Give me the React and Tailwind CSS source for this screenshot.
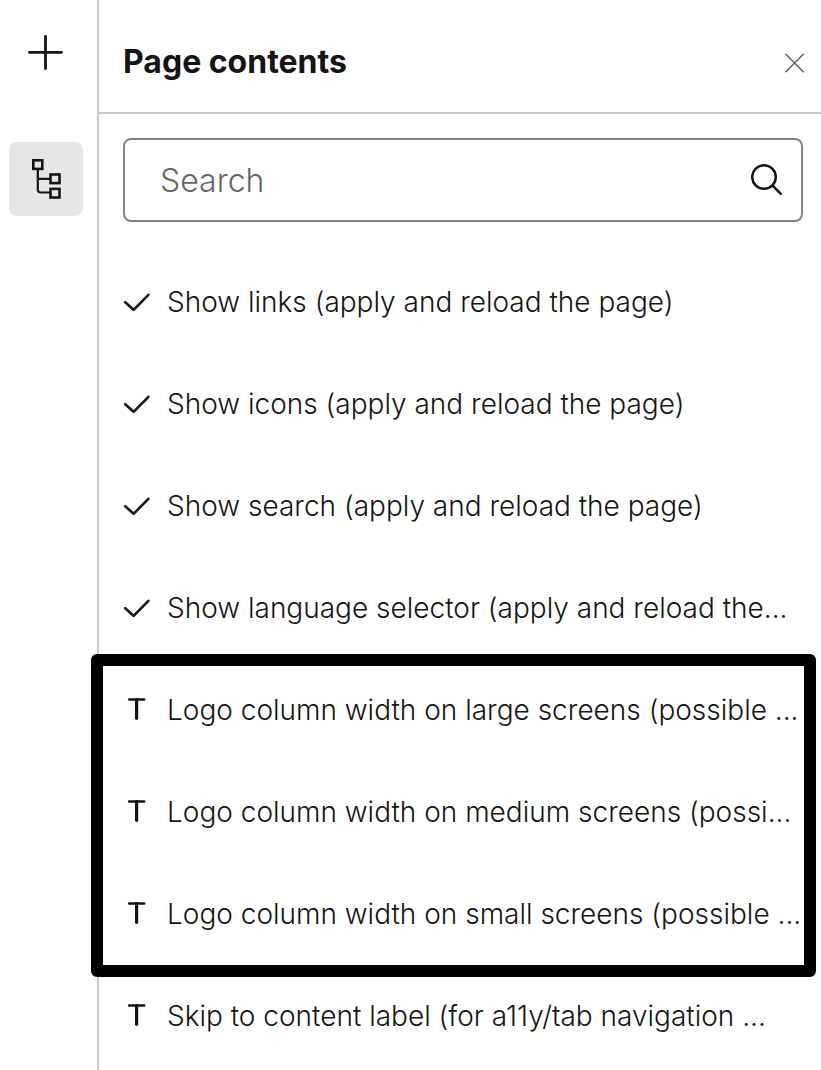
const toggles = [
  'Show links (apply and reload the page)',
  'Show icons (apply and reload the page)',
  'Show search (apply and reload the page)',
  'Show language selector (apply and reload the...',
]

const logoWidths = [
  'Logo column width on large screens (possible ...',
  'Logo column width on medium screens (possi...',
  'Logo column width on small screens (possible ...',
]

const labels = ['Skip to content label (for a11y/tab navigation ...']

function PlusIcon() {
  return (
    <svg width="36" height="36" viewBox="0 0 36 36" fill="none" stroke="#151515" strokeWidth="2.8" strokeLinecap="round" aria-hidden="true">
      <path d="M17.5 1.5v32M1.5 17.4h32" />
    </svg>
  )
}

function TreeIcon() {
  return (
    <svg width="32" height="40" viewBox="0 0 32 40" fill="none" stroke="#151515" strokeWidth="2.6" aria-hidden="true">
      <rect x="3.3" y="1.3" width="9" height="8.6" />
      <rect x="20.5" y="15.5" width="9" height="8.6" />
      <rect x="20.5" y="29.9" width="9" height="8.6" />
      <path d="M7.8 10v20.5a3 3 0 0 0 3 3h9.5M7.8 19.9h12.5" strokeWidth="2.2" />
    </svg>
  )
}

function CloseIcon() {
  return (
    <svg width="20" height="22" viewBox="0 0 20 22" fill="none" stroke="#666" strokeWidth="1.5" aria-hidden="true">
      <path d="M.4 2.8l18.4 18.4M18.8 2.8.4 21.2" />
    </svg>
  )
}

function SearchIcon() {
  return (
    <svg width="32" height="32" viewBox="0 0 32 32" fill="none" stroke="#151515" strokeWidth="2.5" strokeLinecap="round" aria-hidden="true">
      <circle cx="13" cy="13" r="11.8" />
      <path d="M21.6 21.6l8.2 8.2" />
    </svg>
  )
}

function CheckIcon() {
  return (
    <svg width="28" height="20" viewBox="0 0 28 20" fill="none" stroke="#151515" strokeWidth="2.6" strokeLinecap="round" strokeLinejoin="round" aria-hidden="true">
      <path d="M2.2 10.2l8.4 7.6L25.4 2.8" />
    </svg>
  )
}

function TextIcon() {
  return (
    <svg width="28" height="24" viewBox="0 0 28 24" fill="none" stroke="#151515" strokeLinecap="round" aria-hidden="true">
      <path d="M6.2 1.5h15" strokeWidth="2.6" />
      <path d="M13.6 1.5v18.8" strokeWidth="3.2" />
    </svg>
  )
}

function ContentItem({ icon, children }) {
  return (
    <li>
      <button type="button" className="flex h-[102px] w-full items-center gap-4 overflow-hidden pl-6 text-left text-[28px] leading-9 font-light whitespace-nowrap">
        <span className="flex w-7 shrink-0 justify-center">{icon}</span>
        <span>{children}</span>
      </button>
    </li>
  )
}

function App() {
  return (
    <div className="flex min-h-screen overflow-hidden bg-white font-['Inter',sans-serif] text-[#151515]">
      <nav aria-label="Editor tools" className="flex w-[99px] shrink-0 flex-col border-r-2 border-[#c8c8c8] pt-4 pl-[9px]">
        <button type="button" aria-label="Add" className="flex size-[74px] items-center justify-center rounded-lg">
          <PlusIcon />
        </button>
        <button type="button" aria-label="Page contents" className="mt-[52px] flex size-[74px] items-center justify-center rounded-lg bg-[#e6e6e6]">
          <TreeIcon />
        </button>
      </nav>

      <main className="min-w-0 flex-1">
        <header className="flex h-[114px] items-center justify-between border-b-2 border-[#c8c8c8] pt-3 pr-4 pl-6">
          <h1 className="text-[32px] leading-10 font-bold">Page contents</h1>
          <button type="button" aria-label="Close">
            <CloseIcon />
          </button>
        </header>

        <div className="mt-6 mr-[18px] ml-6 flex h-[84px] items-center rounded-lg border-2 border-[#858585] pr-[18px] pl-[35px]">
          <input type="text" aria-label="Search" placeholder="Search" className="min-w-0 flex-1 pt-0.5 text-[32px] leading-10 font-light outline-none placeholder:text-[#666]" />
          <button type="button" aria-label="Run search">
            <SearchIcon />
          </button>
        </div>

        <ul className="mt-[29px]">
          {toggles.map((text) => (
            <ContentItem key={text} icon={<CheckIcon />}>{text}</ContentItem>
          ))}
        </ul>

        {/* Highlighted group, the frame lies over the neighbouring rows */}
        <div className="relative">
          <ul>
            {logoWidths.map((text) => (
              <ContentItem key={text} icon={<TextIcon />}>{text}</ContentItem>
            ))}
          </ul>
          <div className="pointer-events-none absolute -top-[5px] right-[5px] -bottom-3 -left-2 rounded-md border-12 border-black" />
        </div>

        <ul>
          {labels.map((text) => (
            <ContentItem key={text} icon={<TextIcon />}>{text}</ContentItem>
          ))}
        </ul>
      </main>
    </div>
  )
}

export default App
